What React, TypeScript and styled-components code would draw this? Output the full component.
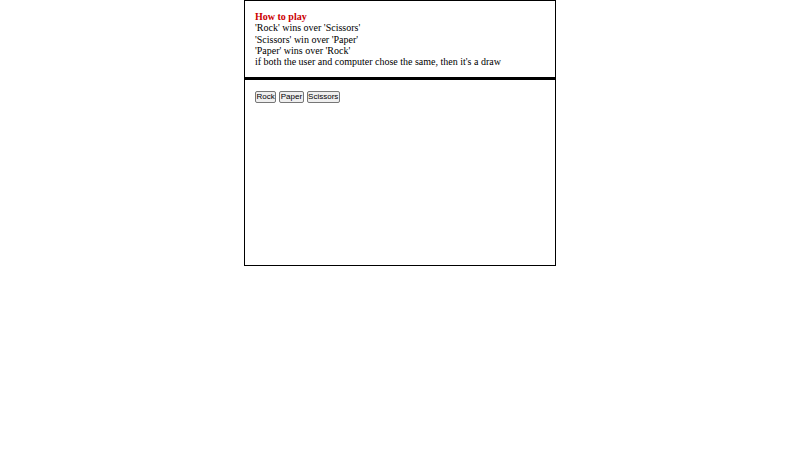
import React from "react";
import styled, { createGlobalStyle } from "styled-components";

const Global = createGlobalStyle`
  html, body { margin: 0; padding: 0; background: #fff; }
  body { font-family: "Liberation Serif", "Times New Roman", serif; font-size: 10px; line-height: 11.25px; color: #000; }
`;

const Container = styled.div`
  width: 312px;
  margin: 0 auto;
  box-sizing: border-box;
`;

const Panel = styled.section<{ $fill?: boolean }>`
  box-sizing: border-box;
  border: 1px solid #000;
  padding: 10px;
  height: ${(p) => (p.$fill ? "188px" : "auto")};
  & + & {
    border-top-width: 2px;
  }
`;

const Title = styled.div`
  color: #cc0000;
  font-weight: bold;
`;

const Line = styled.div``;

const Buttons = styled.div`
  display: flex;
  gap: 3px;
  padding-top: 1px;
`;

const Button = styled.button`
  font-family: "Liberation Sans", Arial, sans-serif;
  font-size: 8px;
  padding: 1px 0.5px;
  margin: 0;
  height: 12px;
  line-height: 8px;
  border: 1px solid #767676;
  border-radius: 2px;
  background: #efefef;
  color: #000;
`;

export default function App() {
  return (
    <>
      <Global />
      <Container>
        <Panel>
          <Title>How to play</Title>
          <Line>'Rock' wins over 'Scissors'</Line>
          <Line>'Scissors' win over 'Paper'</Line>
          <Line>'Paper' wins over 'Rock'</Line>
          <Line>if both the user and computer chose the same, then it's a draw</Line>
        </Panel>
        <Panel $fill>
          <Buttons>
            <Button>Rock</Button>
            <Button>Paper</Button>
            <Button>Scissors</Button>
          </Buttons>
        </Panel>
      </Container>
    </>
  );
}
